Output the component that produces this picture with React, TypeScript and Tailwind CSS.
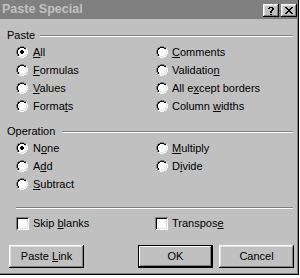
import React from "react";

const RING = [
  "....OOOO....",
  "..OOIIIIOO..",
  ".OIIwwwwIIO.",
  ".OIwwwwwwIO.",
  "OIwwwwwwwwIO",
  "OIwwwwwwwwIO",
  "OIwwwwwwwwIO",
  "OIwwwwwwwwIO",
  ".OIwwwwwwIO.",
  ".OIIwwwwIIO.",
  "..OOIIIIOO..",
  "....OOOO....",
];

const DOT = [
  "............",
  "............",
  "............",
  "............",
  ".....xx.....",
  "....xxxx....",
  "....xxxx....",
  ".....xx.....",
  "............",
  "............",
  "............",
  "............",
];

const CLOSE = [
  "xx....xx",
  ".xx..xx.",
  "..xxxx..",
  "...xx...",
  "..xxxx..",
  ".xx..xx.",
  "xx....xx",
];

const HELP = [
  ".xxxx.",
  "xx..xx",
  "....xx",
  "...xx.",
  "..xx..",
  "..xx..",
  "......",
  "..xx..",
];

function Pixels({ rows, color }: { rows: string[]; color: string }) {
  const w = rows[0].length;
  const h = rows.length;
  const rects: React.ReactElement[] = [];
  rows.forEach((row, r) =>
    row.split("").forEach((ch, c) => {
      if (ch === "x") rects.push(<rect key={`${r}-${c}`} x={c} y={r} width={1} height={1} fill={color} />);
    })
  );
  return (
    <svg width={w} height={h} viewBox={`0 0 ${w} ${h}`} shapeRendering="crispEdges" className="block shrink-0">
      {rects}
    </svg>
  );
}

function Radio({ checked }: { checked?: boolean }) {
  const rects: React.ReactElement[] = [];
  RING.forEach((row, r) =>
    row.split("").forEach((ch, c) => {
      if (ch === ".") return;
      const tl = r + c <= 11;
      let fill = "#ffffff";
      if (ch === "O") fill = tl ? "#808080" : "#ffffff";
      else if (ch === "I") fill = tl ? "#000000" : "#dfdfdf";
      if (checked && DOT[r][c] === "x") fill = "#000000";
      rects.push(<rect key={`${r}-${c}`} x={c} y={r} width={1} height={1} fill={fill} />);
    })
  );
  return (
    <svg width={12} height={12} viewBox="0 0 12 12" shapeRendering="crispEdges" className="block shrink-0">
      {rects}
    </svg>
  );
}

function Check() {
  return (
    <div className="w-[13px] h-[13px] shrink-0 bg-white shadow-[inset_1px_1px_0_#808080,inset_-1px_-1px_0_#ffffff,inset_2px_2px_0_#000000,inset_-2px_-2px_0_#dfdfdf]" />
  );
}

function Acc({ text, i }: { text: string; i: number }) {
  return (
    <span className="whitespace-pre">
      {text.slice(0, i)}
      <span className="underline decoration-1 underline-offset-[1px]">{text[i]}</span>
      {text.slice(i + 1)}
    </span>
  );
}

type Opt = { text: string; i: number; checked?: boolean };

function RadioRow({ o, gap }: { o: Opt; gap: string }) {
  return (
    <div className={`h-[18px] flex items-center ${gap}`}>
      <Radio checked={o.checked} />
      <Acc text={o.text} i={o.i} />
    </div>
  );
}

function Groove({ className }: { className: string }) {
  return <div className={`h-[2px] border-t border-b border-t-[#808080] border-b-white ${className}`} />;
}

function CapButton({ children }: { children: React.ReactNode }) {
  return (
    <div className="w-[16px] h-[13px] bg-[#c0c0c0] flex items-center justify-center shadow-[inset_-1px_-1px_0_#000000,inset_1px_1px_0_#ffffff,inset_-2px_-2px_0_#808080,inset_2px_2px_0_#dfdfdf]">
      {children}
    </div>
  );
}

function Button({ children, def }: { children: React.ReactNode; def?: boolean }) {
  return (
    <div
      className={
        def
          ? "w-[75px] h-[23px] flex items-center justify-center pb-[1px] border border-black shadow-[inset_-1px_-1px_0_#000000,inset_1px_1px_0_#ffffff,inset_-2px_-2px_0_#808080]"
          : "w-[75px] h-[23px] flex items-center justify-center pb-[1px] shadow-[inset_-1px_-1px_0_#000000,inset_1px_1px_0_#ffffff,inset_-2px_-2px_0_#808080,inset_2px_2px_0_#dfdfdf]"
      }
    >
      {children}
    </div>
  );
}

const pasteLeft: Opt[] = [
  { text: "All", i: 0, checked: true },
  { text: "Formulas", i: 0 },
  { text: "Values", i: 0 },
  { text: "Formats", i: 5 },
];
const pasteRight: Opt[] = [
  { text: "Comments", i: 0 },
  { text: "Validation", i: 9 },
  { text: "All except borders", i: 5 },
  { text: "Column widths", i: 7 },
];
const opLeft: Opt[] = [
  { text: "None", i: 1, checked: true },
  { text: "Add", i: 1 },
  { text: "Subtract", i: 0 },
];
const opRight: Opt[] = [
  { text: "Multiply", i: 0 },
  { text: "Divide", i: 1 },
];

export default function App() {
  return (
    <div className="w-[300px] h-[278px] bg-white overflow-hidden font-['Liberation_Sans',Arial,sans-serif] text-[11px] leading-[13px] text-black">
      <div className="w-[299px] h-[275px] border-r border-b border-black">
        <div className="h-full border-r border-b border-[#808080] bg-[#c0c0c0] flex flex-col">
          {/* Title bar */}
          <div className="h-[19px] shrink-0 bg-[#808080] flex pl-[2px]">
            <span className="text-[12.5px] font-bold text-[#c0c0c0] leading-[19px]">Paste Special</span>
            <div className="ml-auto mt-[4px] flex gap-[2px] items-start">
              <CapButton>
                <Pixels rows={HELP} color="#000000" />
              </CapButton>
              <CapButton>
                <Pixels rows={CLOSE} color="#000000" />
              </CapButton>
            </div>
          </div>

          {/* Paste group */}
          <div className="mt-[10px] h-[13px] flex items-center">
            <span className="ml-[7px]">Paste</span>
            <Groove className="ml-[5px] mr-[4px] flex-1" />
          </div>
          <div className="mt-[1px] flex">
            <div className="ml-[16px] w-[140px] flex flex-col">
              {pasteLeft.map((o) => (
                <RadioRow key={o.text} o={o} gap="gap-[5px]" />
              ))}
            </div>
            <div className="flex flex-col">
              {pasteRight.map((o) => (
                <RadioRow key={o.text} o={o} gap="gap-[4px]" />
              ))}
            </div>
          </div>

          {/* Operation group */}
          <div className="mt-[10px] h-[13px] flex items-center">
            <span className="ml-[7px]">Operation</span>
            <Groove className="ml-[7px] mr-[4px] flex-1" />
          </div>
          <div className="mt-[1px] flex">
            <div className="ml-[16px] w-[140px] flex flex-col">
              {opLeft.map((o) => (
                <RadioRow key={o.text} o={o} gap="gap-[5px]" />
              ))}
            </div>
            <div className="flex flex-col">
              {opRight.map((o) => (
                <RadioRow key={o.text} o={o} gap="gap-[4px]" />
              ))}
            </div>
          </div>

          {/* Separator */}
          <Groove className="mt-[14px] ml-[16px] mr-[4px]" />

          {/* Checkboxes */}
          <div className="mt-[6px] h-[17px] flex items-center">
            <div className="ml-[16px] w-[139px] flex items-center gap-[4px]">
              <Check />
              <Acc text="Skip blanks" i={5} />
            </div>
            <div className="flex items-center gap-[4px]">
              <Check />
              <Acc text="Transpose" i={8} />
            </div>
          </div>

          {/* Buttons */}
          <div className="mt-[13px] flex">
            <div className="ml-[9px]">
              <Button>
                <Acc text="Paste Link" i={6} />
              </Button>
            </div>
            <div className="ml-auto">
              <Button def>OK</Button>
            </div>
            <div className="ml-[6px] mr-[3px]">
              <Button>Cancel</Button>
            </div>
          </div>
        </div>
      </div>
    </div>
  );
}
